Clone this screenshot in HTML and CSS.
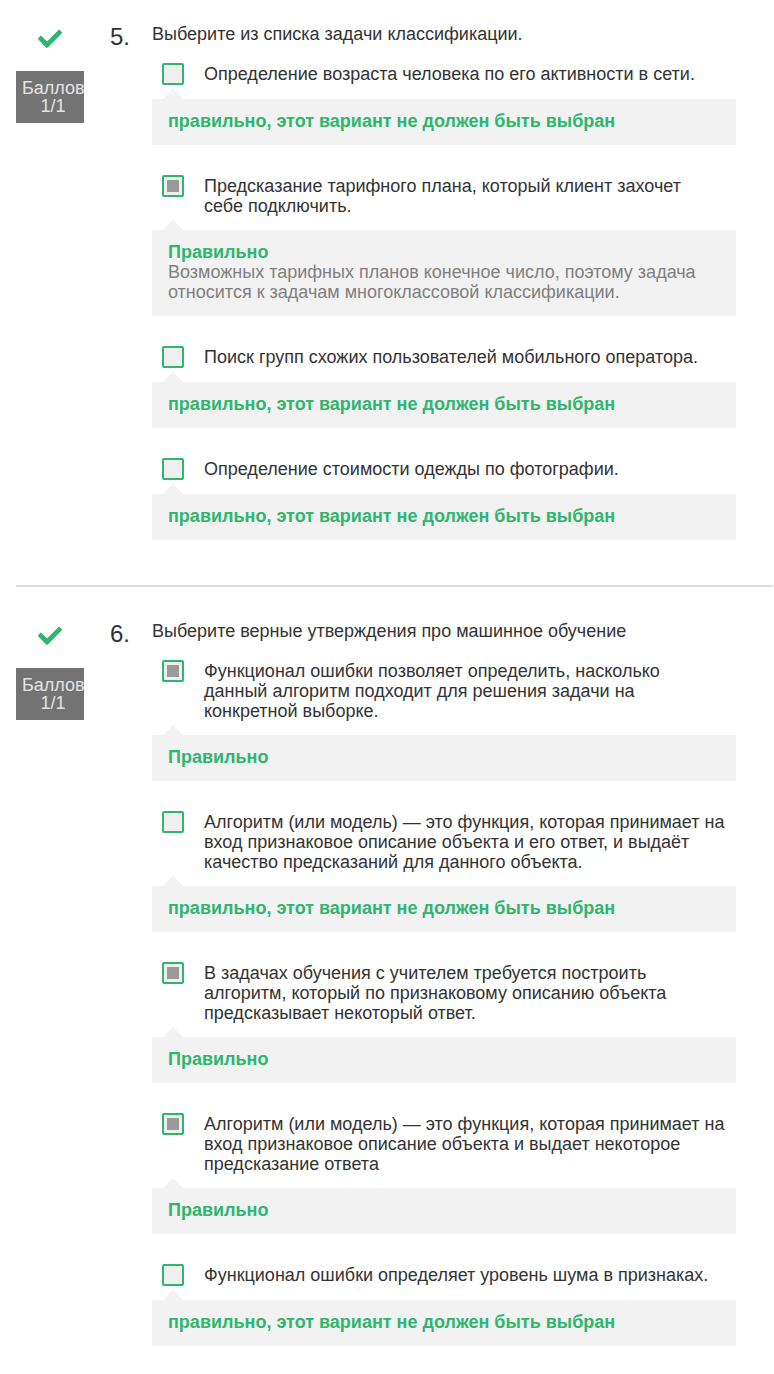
FILE: index.html
```html
<!DOCTYPE html>
<html lang="ru">
<head>
<meta charset="utf-8">
<title>Quiz</title>
<link rel="stylesheet" href="styles.css">
</head>
<body>
<div class="page">
  <section class="question">
    <div class="info">
      <svg class="check" viewBox="0 0 512 400" aria-hidden="true"><path d="M173.898 389.404l-166.4-166.4c-9.997-9.997-9.997-26.206 0-36.204l36.203-36.204c9.997-9.998 26.207-9.998 36.204 0L192 262.69 432.095 22.596c9.997-9.997 26.207-9.997 36.204 0l36.203 36.204c9.997 9.997 9.997 26.206 0 36.204l-294.4 294.401c-9.998 9.997-26.207 9.997-36.204-.001z"/></svg>
      <div class="badge">Баллов<br>1/1</div>
    </div>
    <div class="num">5.</div>
    <div class="content">
      <div class="qtext">Выберите из списка задачи классификации.</div>
      <div class="options">
        <div class="option">
          <div class="row"><span class="box"></span><span class="label">Определение возраста человека по его активности в сети.</span></div>
          <div class="feedback"><b class="ok">правильно, этот вариант не должен быть выбран</b></div>
        </div>
        <div class="option">
          <div class="row"><span class="box checked"></span><span class="label">Предсказание тарифного плана, который клиент захочет<br>себе подключить.</span></div>
          <div class="feedback"><b class="ok">Правильно</b><div class="explain">Возможных тарифных планов конечное число, поэтому задача относится к задачам многоклассовой классификации.</div></div>
        </div>
        <div class="option">
          <div class="row"><span class="box"></span><span class="label">Поиск групп схожих пользователей мобильного оператора.</span></div>
          <div class="feedback"><b class="ok">правильно, этот вариант не должен быть выбран</b></div>
        </div>
        <div class="option">
          <div class="row"><span class="box"></span><span class="label">Определение стоимости одежды по фотографии.</span></div>
          <div class="feedback"><b class="ok">правильно, этот вариант не должен быть выбран</b></div>
        </div>
      </div>
    </div>
  </section>
  <hr class="divider">
  <section class="question">
    <div class="info">
      <svg class="check" viewBox="0 0 512 400" aria-hidden="true"><path d="M173.898 389.404l-166.4-166.4c-9.997-9.997-9.997-26.206 0-36.204l36.203-36.204c9.997-9.998 26.207-9.998 36.204 0L192 262.69 432.095 22.596c9.997-9.997 26.207-9.997 36.204 0l36.203 36.204c9.997 9.997 9.997 26.206 0 36.204l-294.4 294.401c-9.998 9.997-26.207 9.997-36.204-.001z"/></svg>
      <div class="badge">Баллов<br>1/1</div>
    </div>
    <div class="num">6.</div>
    <div class="content">
      <div class="qtext">Выберите верные утверждения про машинное обучение</div>
      <div class="options">
        <div class="option">
          <div class="row"><span class="box checked"></span><span class="label">Функционал ошибки позволяет определить, насколько данный алгоритм подходит для решения задачи на конкретной выборке.</span></div>
          <div class="feedback"><b class="ok">Правильно</b></div>
        </div>
        <div class="option">
          <div class="row"><span class="box"></span><span class="label">Алгоритм (или модель) — это функция, которая принимает на вход признаковое описание объекта и его ответ, и выдаёт качество предсказаний для данного объекта.</span></div>
          <div class="feedback"><b class="ok">правильно, этот вариант не должен быть выбран</b></div>
        </div>
        <div class="option">
          <div class="row"><span class="box checked"></span><span class="label">В задачах обучения с учителем требуется построить алгоритм, который по признаковому описанию объекта предсказывает некоторый ответ.</span></div>
          <div class="feedback"><b class="ok">Правильно</b></div>
        </div>
        <div class="option">
          <div class="row"><span class="box checked"></span><span class="label">Алгоритм (или модель) — это функция, которая принимает на вход признаковое описание объекта и выдает некоторое предсказание ответа</span></div>
          <div class="feedback"><b class="ok">Правильно</b></div>
        </div>
        <div class="option">
          <div class="row"><span class="box"></span><span class="label">Функционал ошибки определяет уровень шума в признаках.</span></div>
          <div class="feedback"><b class="ok">правильно, этот вариант не должен быть выбран</b></div>
        </div>
      </div>
    </div>
  </section>
</div>
</body>
</html>
```

FILE: styles.css
```css
html, body {
  margin: 0;
  padding: 0;
  background: #ffffff;
}
body {
  font-family: "Liberation Sans", Arial, sans-serif;
  font-size: 18px;
  line-height: 20px;
  color: #333333;
}
.page {
  padding-top: 24px;
  padding-bottom: 30px;
}
.question {
  display: flex;
  align-items: flex-start;
  padding: 0 38px 0 16px;
}
.info {
  width: 68px;
  flex: none;
  display: flex;
  flex-direction: column;
  align-items: center;
}
.check {
  width: 24px;
  height: 19px;
  margin-top: 5px;
  fill: #2eb56e;
}
.badge {
  align-self: stretch;
  margin-top: 23px;
  background: #737373;
  color: #e2e2e2;
  font-size: 18px;
  line-height: 18px;
  padding: 8px 0 8px 6px;
  text-align: center;
  overflow: hidden;
  white-space: nowrap;
}
.num {
  width: 42px;
  flex: none;
  margin-left: 26px;
  font-size: 24px;
  line-height: 20px;
  padding-top: 3px;
  color: #333;
}
.content {
  flex: 1;
  min-width: 0;
}
.qtext {
  line-height: 20px;
}
.options {
  margin-top: 19px;
  display: flex;
  flex-direction: column;
  gap: 30px;
}
.row {
  display: flex;
  align-items: flex-start;
  padding-left: 10px;
  margin-bottom: 14px;
}
.box {
  flex: none;
  width: 22px;
  height: 22px;
  box-sizing: border-box;
  border: 2px solid #2eb56e;
  border-radius: 2px;
  background: #efefef;
  position: relative;
}
.box.checked::after {
  content: "";
  position: absolute;
  left: 3px;
  top: 3px;
  width: 12px;
  height: 12px;
  background: #9a9a9a;
}
.label {
  margin-left: 20px;
  margin-top: 1px;
  padding-right: 10px;
}
.feedback {
  position: relative;
  background: #f2f2f2;
  padding: 12px 16px 14px;
}
.feedback::before {
  content: "";
  position: absolute;
  top: -10px;
  left: 11px;
  border-left: 10px solid transparent;
  border-right: 10px solid transparent;
  border-bottom: 10px solid #f2f2f2;
}
.ok {
  display: block;
  color: #2eb56e;
  font-weight: 700;
}
.explain {
  color: #808080;
}
.divider {
  border: 0;
  height: 2px;
  background: #dddddd;
  margin: 45px 1px 34px 16px;
}
```
